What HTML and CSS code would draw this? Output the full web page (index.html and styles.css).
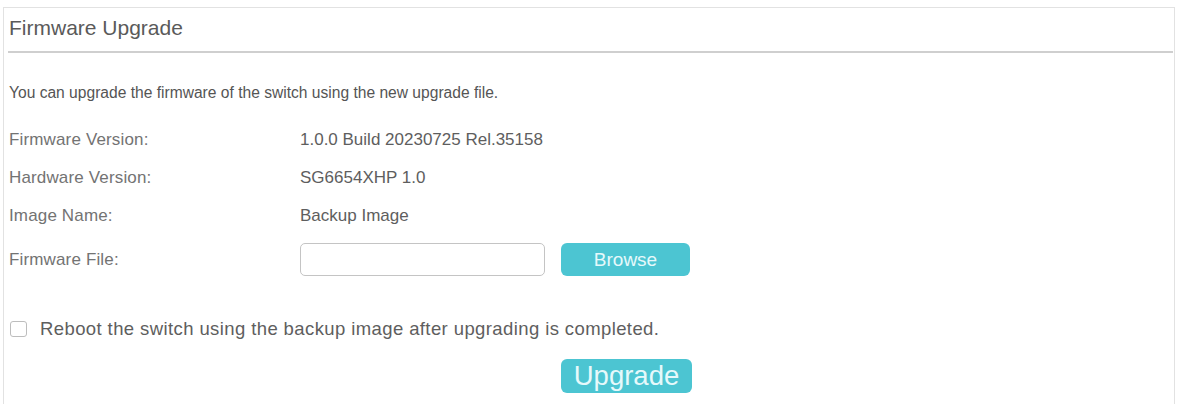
FILE: index.html
```html
<!DOCTYPE html>
<html>
<head>
<meta charset="utf-8">
<link rel="stylesheet" href="styles.css">
</head>
<body>
<div class="panel">
  <div class="title">Firmware Upgrade</div>
  <div class="rule"></div>
  <div class="content">
    <div class="intro">You can upgrade the firmware of the switch using the new upgrade file.</div>
    <div class="row"><div class="label">Firmware Version:</div><div class="value">1.0.0 Build 20230725 Rel.35158</div></div>
    <div class="row"><div class="label">Hardware Version:</div><div class="value">SG6654XHP 1.0</div></div>
    <div class="row"><div class="label">Image Name:</div><div class="value">Backup Image</div></div>
    <div class="row file-row"><div class="label">Firmware File:</div><div class="value file"><input class="file-input" type="text"><button class="btn browse">Browse</button></div></div>
    <label class="check-row"><span class="box"></span><span class="check-text">Reboot the switch using the backup image after upgrading is completed.</span></label>
    <div class="actions"><button class="btn upgrade">Upgrade</button></div>
  </div>
</div>
</body>
</html>
```
FILE: styles.css
```css
html, body {
  margin: 0;
  padding: 0;
  background: #ffffff;
  font-family: "Liberation Sans", Arial, sans-serif;
}
.panel {
  margin: 7px 0 0 3px;
  width: 1172px;
  height: 397px;
  overflow: hidden;
  border: 1px solid #e2e2e2;
  border-bottom: none;
  box-sizing: border-box;
}
.title {
  height: 42px;
  line-height: 40px;
  padding-left: 5px;
  font-size: 21px;
  color: #5a5a5a;
}
.rule {
  height: 2px;
  background: #cfcfcf;
  margin: 1px 1px 0 4px;
}
.content {
  padding-left: 5px;
}
.intro {
  margin-top: 25px;
  height: 30px;
  line-height: 30px;
  font-size: 15.6px;
  color: #555555;
}
.row {
  display: flex;
  align-items: center;
  height: 38px;
  font-size: 17px;
}
.row:nth-child(2) {
  margin-top: 13px;
}
.label {
  width: 291px;
  color: #737373;
  letter-spacing: 0.15px;
}
.value {
  color: #5e5e5e;
}
.file-row {
  margin-top: 8px;
  height: 33px;
}
.file {
  display: flex;
  align-items: center;
  gap: 16px;
}
.file-input {
  width: 245px;
  height: 33px;
  box-sizing: border-box;
  border: 1px solid #c4c4c4;
  border-radius: 5px;
  margin: 0;
  padding: 0 8px;
  outline: none;
}
.btn {
  border: none;
  background: #4cc5d2;
  color: #e6f9fb;
  border-radius: 6px;
  font-family: "Liberation Sans", Arial, sans-serif;
  padding: 0;
  margin: 0;
}
.browse {
  width: 129px;
  height: 33px;
  font-size: 19px;
}
.check-row {
  display: flex;
  align-items: center;
  margin-top: 43px;
  height: 20px;
  font-size: 18.5px;
  letter-spacing: 0.4px;
  color: #5e5e5e;
}
.box {
  width: 17px;
  height: 16px;
  box-sizing: border-box;
  border: 1px solid #bdbdbd;
  border-radius: 3px;
  margin-left: 1px;
  margin-right: 13px;
  background: #fff;
}
.actions {
  margin-top: 20px;
  padding-left: 552px;
}
.upgrade {
  width: 131px;
  height: 34px;
  font-size: 27.5px;
}
```
